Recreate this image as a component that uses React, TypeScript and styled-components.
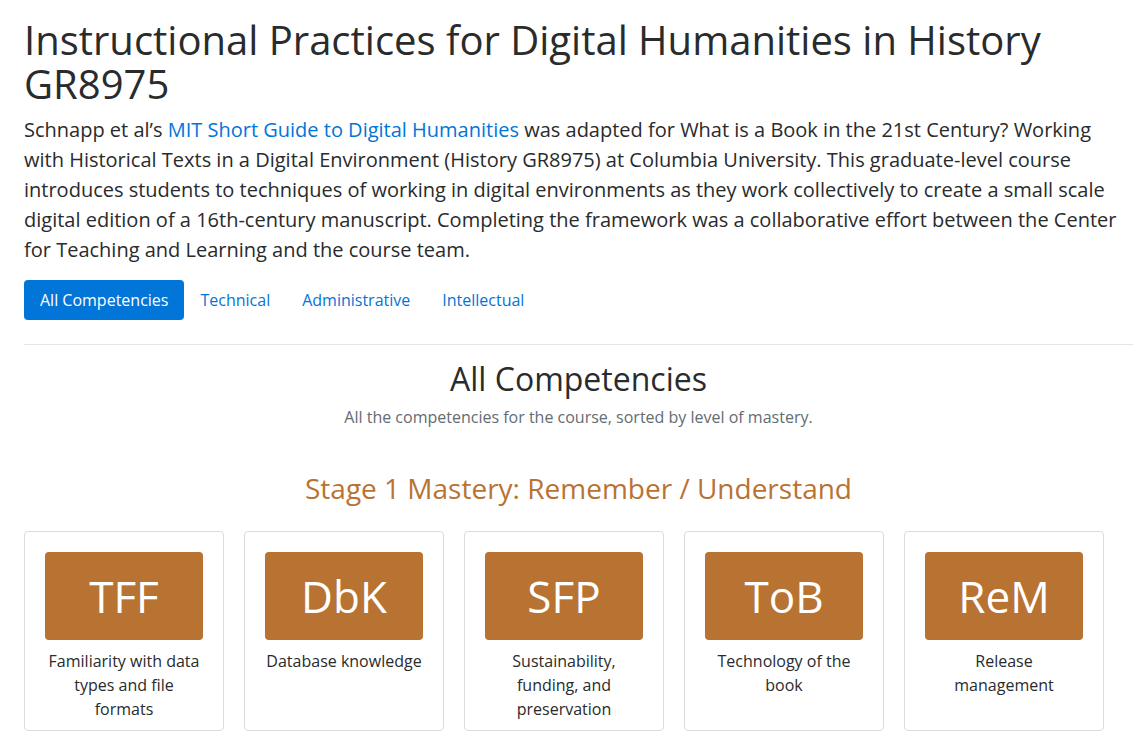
import React from "react";
import styled, { createGlobalStyle } from "styled-components";

const Global = createGlobalStyle`
  html, body { margin: 0; padding: 0; background: #fff; }
  body {
    font-family: "Open Sans", "Noto Sans", sans-serif;
    color: #292b2c;
    -webkit-font-smoothing: antialiased;
  }
  * { box-sizing: border-box; }
`;

const Page = styled.div`
  padding: 18px 14px 0 24px;
`;

const Title = styled.h1`
  margin: 0 0 9px;
  font-size: 40px;
  font-weight: 400;
  line-height: 44px;
  color: #292b2c;
`;

const Intro = styled.p`
  margin: 0 0 15px;
  max-width: 1100px;
  font-size: 20px;
  line-height: 30px;
`;

const Link = styled.a`
  color: #0275d8;
  text-decoration: none;
`;

const Pills = styled.nav`
  display: flex;
  align-items: center;
`;

const Pill = styled.a<{ $active?: boolean }>`
  display: block;
  padding: 0 16px;
  height: 40px;
  line-height: 40px;
  font-size: 16px;
  border-radius: 4px;
  text-decoration: none;
  color: ${(p) => (p.$active ? "#fff" : "#0275d8")};
  background: ${(p) => (p.$active ? "#0275d8" : "transparent")};
`;

const Rule = styled.hr`
  margin: 24px 0 0;
  border: 0;
  border-top: 1px solid #e5e5e5;
`;

const Section = styled.section`
  text-align: center;
`;

const SectionTitle = styled.h2`
  margin: 14px 0 0;
  font-size: 32px;
  font-weight: 400;
  line-height: 40px;
`;

const Muted = styled.p`
  margin: 6px 0 0;
  font-size: 16px;
  line-height: 24px;
  color: #636c72;
`;

const StageTitle = styled.h3`
  margin: 42px 0 0;
  font-size: 28px;
  font-weight: 400;
  line-height: 34px;
  color: #b87333;
`;

const Grid = styled.div`
  display: flex;
  gap: 20px;
  margin-top: 26px;
`;

const Card = styled.div`
  width: 200px;
  height: 200px;
  border: 1px solid #dcdcdc;
  border-radius: 4px;
  padding: 20px 20px 0;
  text-align: center;
`;

const Badge = styled.div`
  height: 88px;
  background: #b87333;
  border-radius: 4px;
  color: #fff;
  font-size: 44px;
  line-height: 88px;
`;

const Desc = styled.div<{ $pad: number }>`
  margin-top: 9px;
  font-size: 16px;
  line-height: 24px;
  padding: 0 ${(p) => p.$pad}px;
`;

const cards = [
  { abbr: "TFF", text: "Familiarity with data types and file formats", pad: 0 },
  { abbr: "DbK", text: "Database knowledge", pad: 0 },
  { abbr: "SFP", text: "Sustainability, funding, and preservation", pad: 18 },
  { abbr: "ToB", text: "Technology of the book", pad: 10 },
  { abbr: "ReM", text: "Release management", pad: 20 },
];

export default function App() {
  return (
    <>
      <Global />
      <Page>
        <Title>Instructional Practices for Digital Humanities in History GR8975</Title>
        <Intro>
          Schnapp et al’s <Link href="#">MIT Short Guide to Digital Humanities</Link> was adapted for
          What is a Book in the 21st Century? Working with Historical Texts in a Digital Environment
          (History GR8975) at Columbia University. This graduate-level course introduces students to
          techniques of working in digital environments as they work collectively to create a small
          scale digital edition of a 16th-century manuscript. Completing the framework was a
          collaborative effort between the Center for Teaching and Learning and the course team.
        </Intro>
        <Pills>
          <Pill $active href="#">All Competencies</Pill>
          <Pill href="#">Technical</Pill>
          <Pill href="#">Administrative</Pill>
          <Pill href="#">Intellectual</Pill>
        </Pills>
        <Rule />
        <Section>
          <SectionTitle>All Competencies</SectionTitle>
          <Muted>All the competencies for the course, sorted by level of mastery.</Muted>
          <StageTitle>Stage 1 Mastery: Remember / Understand</StageTitle>
          <Grid>
            {cards.map((c) => (
              <Card key={c.abbr}>
                <Badge>{c.abbr}</Badge>
                <Desc $pad={c.pad}>{c.text}</Desc>
              </Card>
            ))}
          </Grid>
        </Section>
      </Page>
    </>
  );
}
